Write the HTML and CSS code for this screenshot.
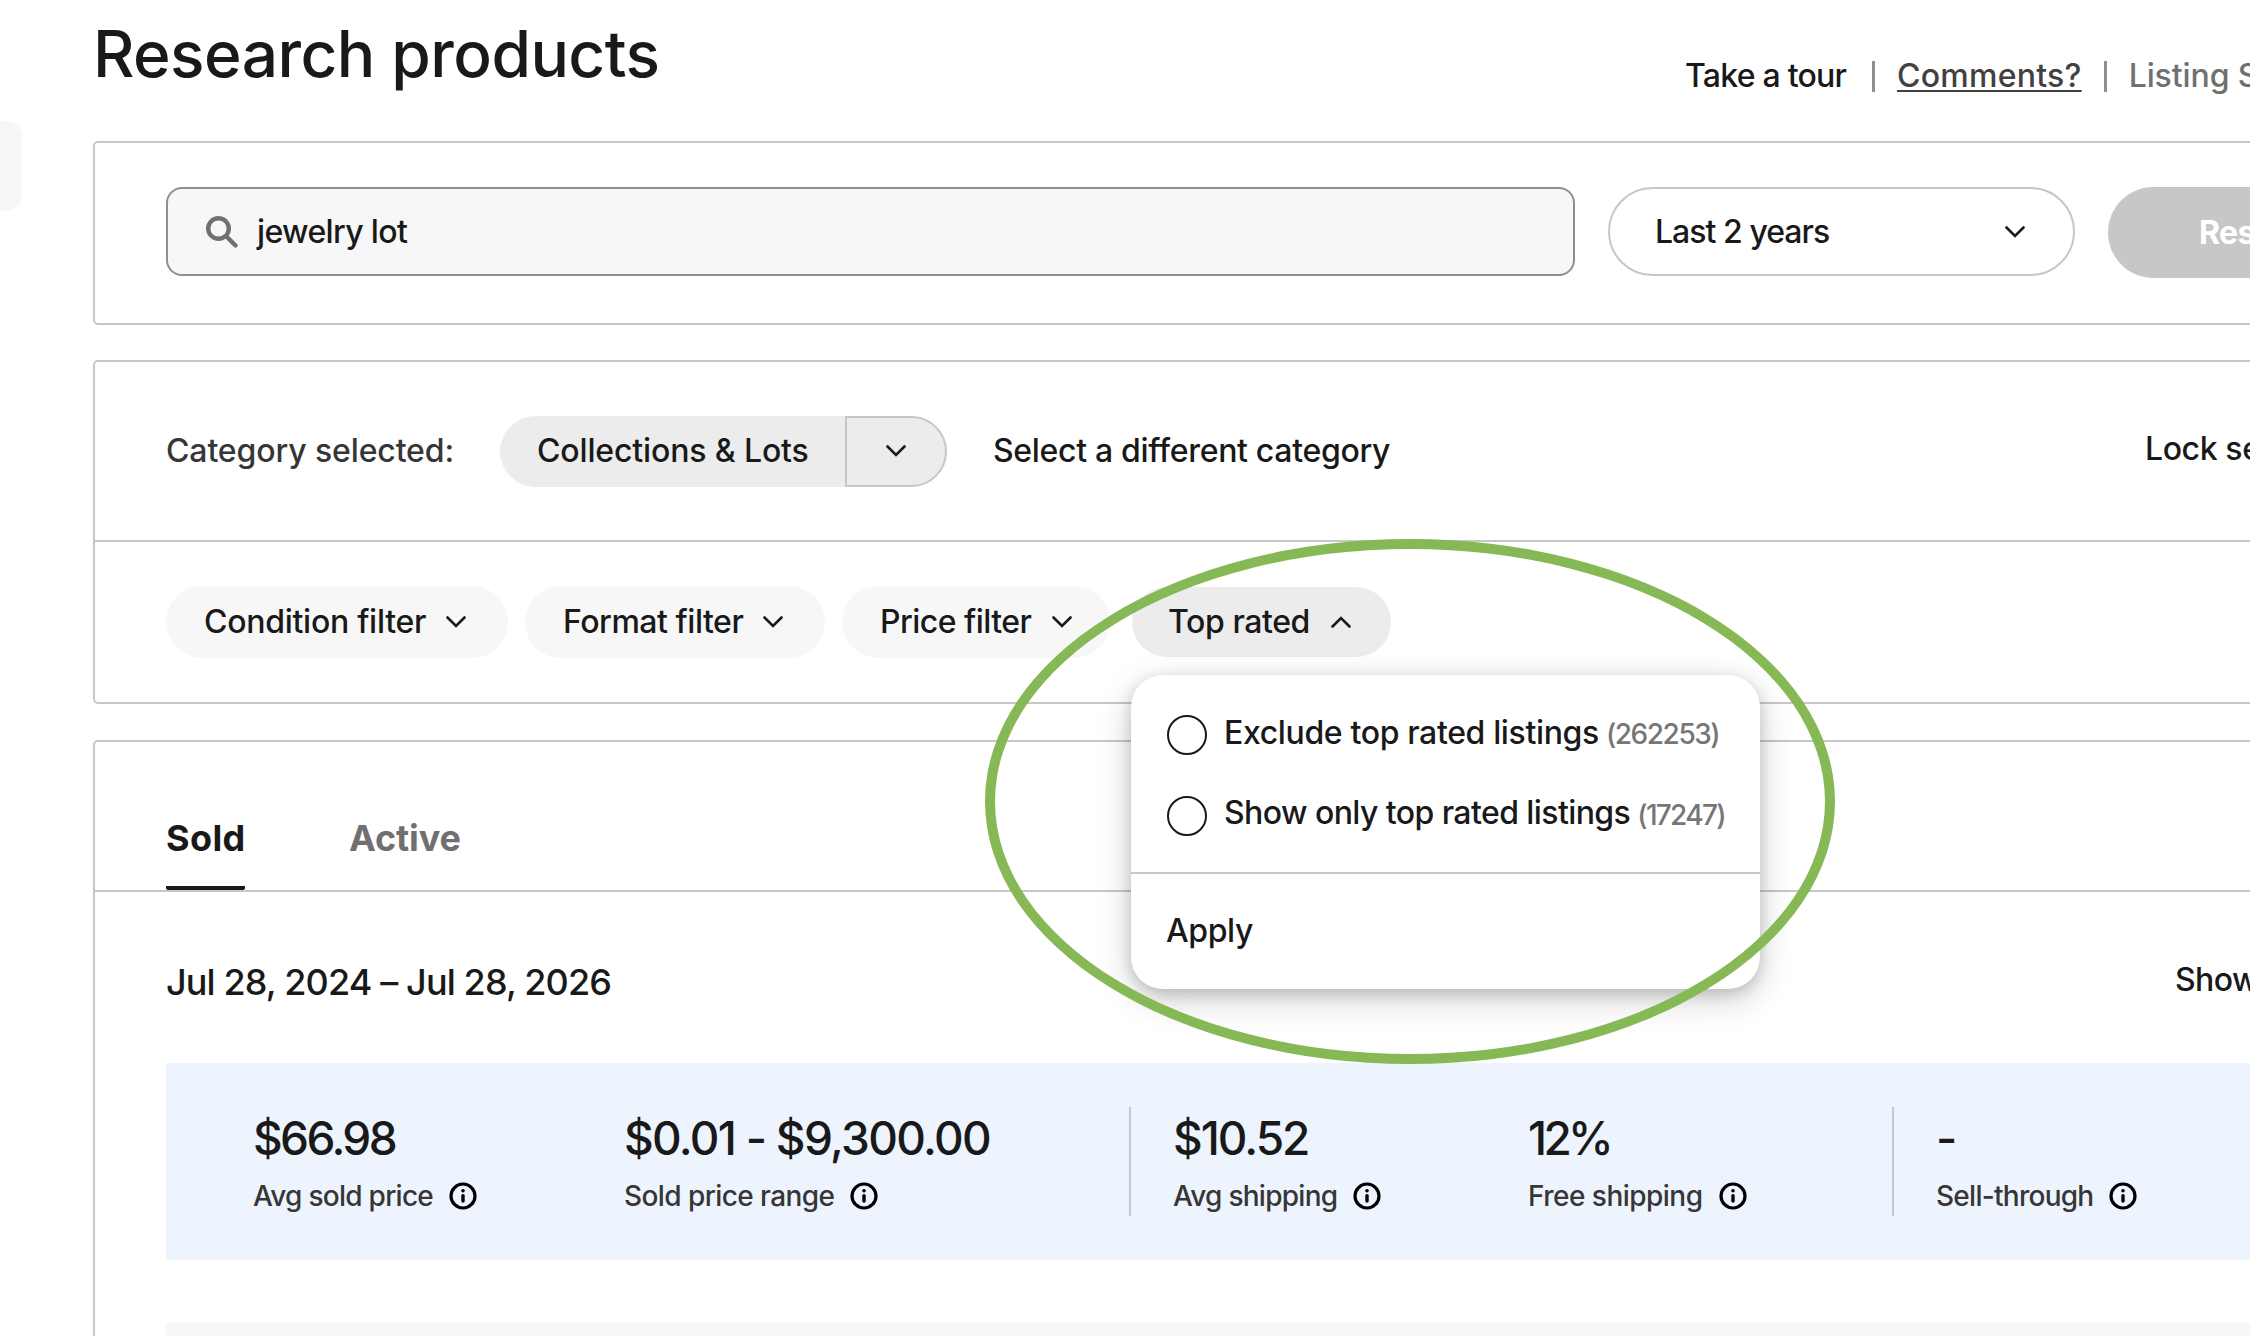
FILE: index.html
```
<!DOCTYPE html>
<html lang="en">
<head>
  <meta charset="UTF-8">
  <title>Research products</title>
  <link rel="stylesheet" href="styles.css">
</head>
<body>

  <!-- Shared icons -->
  <svg class="icon-defs" width="0" height="0">
    <symbol id="icon-chevron" viewBox="0 0 20 12">
      <path d="M1.5 1.5 L10 10 L18.5 1.5" fill="none" stroke="currentColor" stroke-width="2.6" stroke-linecap="round"/>
    </symbol>
    <symbol id="icon-info" viewBox="0 0 28 28">
      <circle cx="14" cy="14" r="12" fill="none" stroke="currentColor" stroke-width="3.2"/>
      <circle cx="14" cy="8.8" r="1.8" fill="currentColor"/>
      <path d="M14 13.6 V19" stroke="currentColor" stroke-width="3.4" stroke-linecap="round"/>
    </symbol>
  </svg>

  <div class="side-tab"></div>

  <main class="page">
    <header class="page-header">
      <h1>Research products</h1>
      <nav class="header-links">
        <a class="tour" href="#">Take a tour</a>
        <span class="separator"></span>
        <a class="comments" href="#">Comments?</a>
        <span class="separator"></span>
        <span class="site">Listing S</span>
      </nav>
    </header>

    <form class="panel search-panel">
      <label class="search-box">
        <svg class="search-icon" viewBox="0 0 32 32">
          <circle cx="12.5" cy="12.5" r="10.3" fill="none" stroke="currentColor" stroke-width="4.4"/>
          <path d="M20.5 20.5 L29.5 29.5" stroke="currentColor" stroke-width="4.4" stroke-linecap="round"/>
        </svg>
        <span class="search-text">jewelry lot</span>
      </label>
      <button type="button" class="period">
        <span>Last 2 years</span>
        <svg class="chevron"><use href="#icon-chevron"/></svg>
      </button>
      <button type="button" class="research">Research</button>
    </form>

    <section class="panel">
      <div class="category-row">
        <span class="category-label">Category selected:</span>
        <button type="button" class="category-pill">Collections &amp; Lots</button>
        <button type="button" class="category-toggle">
          <svg class="chevron"><use href="#icon-chevron"/></svg>
        </button>
        <a class="category-change" href="#">Select a different category</a>
        <span class="lock">Lock se</span>
      </div>

      <div class="filter-row">
        <button type="button" class="chip condition"><span>Condition filter</span><svg class="chevron"><use href="#icon-chevron"/></svg></button>
        <button type="button" class="chip format"><span>Format filter</span><svg class="chevron"><use href="#icon-chevron"/></svg></button>
        <button type="button" class="chip price"><span>Price filter</span><svg class="chevron"><use href="#icon-chevron"/></svg></button>

        <div class="top-rated">
          <button type="button" class="chip chip-open"><span>Top rated</span><svg class="chevron chevron-up"><use href="#icon-chevron"/></svg></button>

          <div class="menu">
            <div class="menu-options">
              <label class="option">
                <span class="radio"></span>
                <span class="exclude">Exclude top rated listings</span>
                <span class="count count-exclude">(262253)</span>
              </label>
              <label class="option">
                <span class="radio"></span>
                <span class="only">Show only top rated listings</span>
                <span class="count count-only">(17247)</span>
              </label>
            </div>
            <button type="button" class="apply">Apply</button>
          </div>
          <div class="highlight"></div>
        </div>
      </div>
    </section>

    <section class="panel results">
      <div class="tabs">
        <a class="tab tab-active" href="#">Sold</a>
        <a class="tab tab-other" href="#">Active</a>
      </div>

      <div class="range-row">
        <span class="date-range">Jul 28, 2024 – Jul 28, 2026</span>
        <span class="show">Show</span>
      </div>

      <div class="stats">
        <div class="stat stat-avg">
          <div class="value">$66.98</div>
          <div class="label">Avg sold price <svg class="info"><use href="#icon-info"/></svg></div>
        </div>
        <div class="stat stat-range">
          <div class="value">$0.01 - $9,300.00</div>
          <div class="label">Sold price range <svg class="info"><use href="#icon-info"/></svg></div>
        </div>
        <div class="stat stat-shipping divided">
          <div class="value">$10.52</div>
          <div class="label">Avg shipping <svg class="info"><use href="#icon-info"/></svg></div>
        </div>
        <div class="stat stat-free">
          <div class="value">12%</div>
          <div class="label">Free shipping <svg class="info"><use href="#icon-info"/></svg></div>
        </div>
        <div class="stat stat-sell divided">
          <div class="value">-</div>
          <div class="label">Sell-through <svg class="info"><use href="#icon-info"/></svg></div>
        </div>
      </div>

      <div class="table-head"></div>
    </section>
  </main>

</body>
</html>
```
FILE: styles.css
```
* {
  box-sizing: border-box;
}
body {
  margin: 0;
  width: 2250px;
  height: 1336px;
  overflow: hidden;
  display: flex;
  background: #fff;
  color: #191919;
  font-family: Inter, "Liberation Sans", sans-serif;
  font-size: 32px;
  font-weight: 500;
  line-height: 40px;
  white-space: nowrap;
}
a {
  color: inherit;
  text-decoration: none;
}
button {
  margin: 0;
  padding: 0;
  border: none;
  background: none;
  color: inherit;
  font: inherit;
  text-align: left;
  cursor: pointer;
}
.icon-defs {
  position: absolute;
}
.chevron {
  width: 20px;
  height: 12px;
  flex: none;
}
.chevron-up {
  transform: rotate(180deg);
}

.side-tab {
  flex: none;
  width: 22px;
  height: 90px;
  margin: 121px 71px 0 0;
  background: #f7f7f7;
  border-radius: 0 16px 16px 0;
}
.page {
  flex: none;
  width: 2157px;
  height: 1336px;
  overflow: hidden;
}

/* Header */
.page-header {
  display: flex;
  align-items: flex-start;
  height: 141px;
}
h1 {
  flex: none;
  width: 1592px;
  margin: 14px 0 0;
  font-size: 64px;
  font-weight: 500;
  line-height: 80px;
  letter-spacing: -0.55px;
}
.header-links {
  display: flex;
  align-items: center;
  margin-top: 56px;
}
.tour {
  width: 187px;
  letter-spacing: -0.75px;
}
.separator {
  flex: none;
  width: 3px;
  height: 31px;
  background: #8f8f8f;
}
.comments {
  margin: 0 22px;
  color: #414141;
  letter-spacing: 0.25px;
  text-decoration: underline;
  text-decoration-thickness: 2px;
  text-underline-offset: 3px;
}
.site {
  margin-left: 22px;
  color: #707070;
  letter-spacing: -0.1px;
}

/* Search */
.panel {
  width: 2400px;
  border: 2px solid #c7c7c7;
  border-radius: 5px;
  margin-bottom: 35px;
}
.search-panel {
  display: flex;
  gap: 33px;
  height: 184px;
  padding: 44px 0 0 71px;
}
.search-box {
  flex: none;
  display: flex;
  align-items: center;
  width: 1409px;
  height: 89px;
  padding-left: 38px;
  background: #f7f7f7;
  border: 2px solid #8f8f8f;
  border-radius: 16px;
}
.search-icon {
  width: 32px;
  height: 32px;
  margin-right: 19px;
  color: #707070;
}
.search-text {
  letter-spacing: -0.65px;
}
.period {
  flex: none;
  display: flex;
  align-items: center;
  justify-content: space-between;
  width: 467px;
  height: 89px;
  padding: 0 48px 0 45px;
  border: 2px solid #c7c7c7;
  border-radius: 45px;
  letter-spacing: -0.97px;
}
.research {
  flex: none;
  width: 340px;
  height: 91px;
  padding-left: 91px;
  background: #c7c7c7;
  border-radius: 46px;
  color: #fff;
  font-weight: 700;
  letter-spacing: -0.6px;
}

/* Category */
.category-row {
  display: flex;
  align-items: center;
  height: 180px;
  padding-left: 71px;
  border-bottom: 2px solid #c7c7c7;
}
.category-label {
  width: 334px;
  color: #363636;
  letter-spacing: -0.12px;
}
.category-pill {
  width: 345px;
  height: 71px;
  padding-left: 37px;
  background: #ececec;
  border-radius: 36px 0 0 36px;
  letter-spacing: -0.14px;
}
.category-toggle {
  display: flex;
  align-items: center;
  justify-content: center;
  width: 102px;
  height: 71px;
  background: #ececec;
  border: 2px solid #c7c7c7;
  border-radius: 0 36px 36px 0;
}
.category-change {
  width: 1152px;
  margin-left: 46px;
  letter-spacing: -0.32px;
}
.lock {
  padding-bottom: 4px;
  letter-spacing: -0.4px;
}

/* Filters */
.filter-row {
  display: flex;
  align-items: center;
  gap: 17px;
  height: 160px;
  padding-left: 71px;
}
.chip {
  display: flex;
  align-items: center;
  justify-content: space-between;
  height: 72px;
  padding: 0 42px 0 38px;
  background: #f7f7f7;
  border-radius: 36px;
}
.condition {
  width: 342px;
  letter-spacing: -0.28px;
}
.format {
  width: 300px;
  letter-spacing: -0.47px;
}
.price {
  width: 268px;
  padding-right: 38px;
  letter-spacing: -0.53px;
}
.top-rated {
  position: relative;
  margin-left: 5px;
}
.chip-open {
  width: 259px;
  height: 70px;
  padding: 0 40px 0 36px;
  background: #ececec;
  letter-spacing: -0.4px;
}

/* Top rated menu */
.menu {
  position: absolute;
  top: 88px;
  left: -1px;
  z-index: 10;
  width: 629px;
  height: 314px;
  background: #fff;
  border-radius: 32px;
  box-shadow: 0 4px 14px rgba(0, 0, 0, 0.15), 0 10px 34px rgba(0, 0, 0, 0.2);
}
.menu-options {
  display: grid;
  gap: 41px;
  height: 199px;
  padding: 40px 0 0 36px;
  align-content: start;
  border-bottom: 2px solid #c7c7c7;
}
.option {
  display: flex;
  align-items: center;
  height: 40px;
}
.option span {
  margin-top: -4px;
}
.option .radio {
  width: 40px;
  height: 40px;
  margin: 0 17px 0 0;
  border: 2px solid #191919;
  border-radius: 50%;
}
.exclude {
  letter-spacing: -0.36px;
}
.option .only {
  margin-top: -6px;
  letter-spacing: -0.58px;
}
.option .count {
  margin: -2px 0 0 7px;
  color: #767676;
  font-size: 28px;
}
.count-exclude {
  letter-spacing: -1.45px;
}
.count-only {
  letter-spacing: -1.7px;
}
.apply {
  width: 100%;
  height: 113px;
  padding-left: 35px;
  letter-spacing: -0.38px;
}

/* Green ring drawn around the open menu */
.highlight {
  position: absolute;
  top: -48px;
  left: -147px;
  z-index: 11;
  width: 850px;
  height: 525px;
  border: 10px solid #86b855;
  border-radius: 50%;
  pointer-events: none;
}

/* Results */
.results {
  margin-top: 36px;
  margin-bottom: 0;
  height: 640px;
}
.tabs {
  display: flex;
  gap: 104px;
  height: 150px;
  padding-left: 71px;
  border-bottom: 2px solid #c7c7c7;
}
.tab {
  height: 148px;
  padding-top: 76px;
  font-size: 36px;
  font-weight: 700;
}
.tab-active {
  width: 79px;
  border-bottom: 4px solid #191919;
  border-radius: 2px;
  letter-spacing: 0.4px;
}
.tab-other {
  color: #707070;
  letter-spacing: -0.1px;
}
.range-row {
  display: flex;
  align-items: center;
  height: 171px;
  padding: 8px 0 0 71px;
}
.date-range {
  width: 2009px;
  font-size: 36px;
  letter-spacing: -0.87px;
}
.show {
  padding-bottom: 3px;
  letter-spacing: -0.6px;
}
.stats {
  display: flex;
  height: 197px;
  margin-left: 71px;
  padding: 44px 0 0 87px;
  background: #edf4fe;
}
.stat {
  height: 109px;
}
.divided {
  border-left: 2px solid #c7c7cf;
  padding-left: 42px;
}
.stat-avg {
  width: 371px;
}
.stat-range {
  width: 505px;
}
.stat-shipping {
  width: 399px;
}
.stat-free {
  width: 364px;
}
.value {
  font-size: 46px;
  line-height: 62px;
  letter-spacing: -2.6px;
}
.stat-range .value {
  letter-spacing: -1.7px;
}
.stat-shipping .value {
  letter-spacing: -2px;
}
.stat-free .value {
  letter-spacing: -3.7px;
}
.label {
  display: flex;
  align-items: center;
  gap: 16px;
  margin-top: 7px;
  color: #363636;
  font-size: 28px;
  letter-spacing: -0.73px;
}
.stat-range .label {
  letter-spacing: -0.58px;
}
.stat-free .label {
  letter-spacing: -0.52px;
}
.info {
  width: 28px;
  height: 28px;
  color: #000;
}
.table-head {
  height: 54px;
  margin: 63px 0 0 71px;
  background: #f7f7f7;
}
```
